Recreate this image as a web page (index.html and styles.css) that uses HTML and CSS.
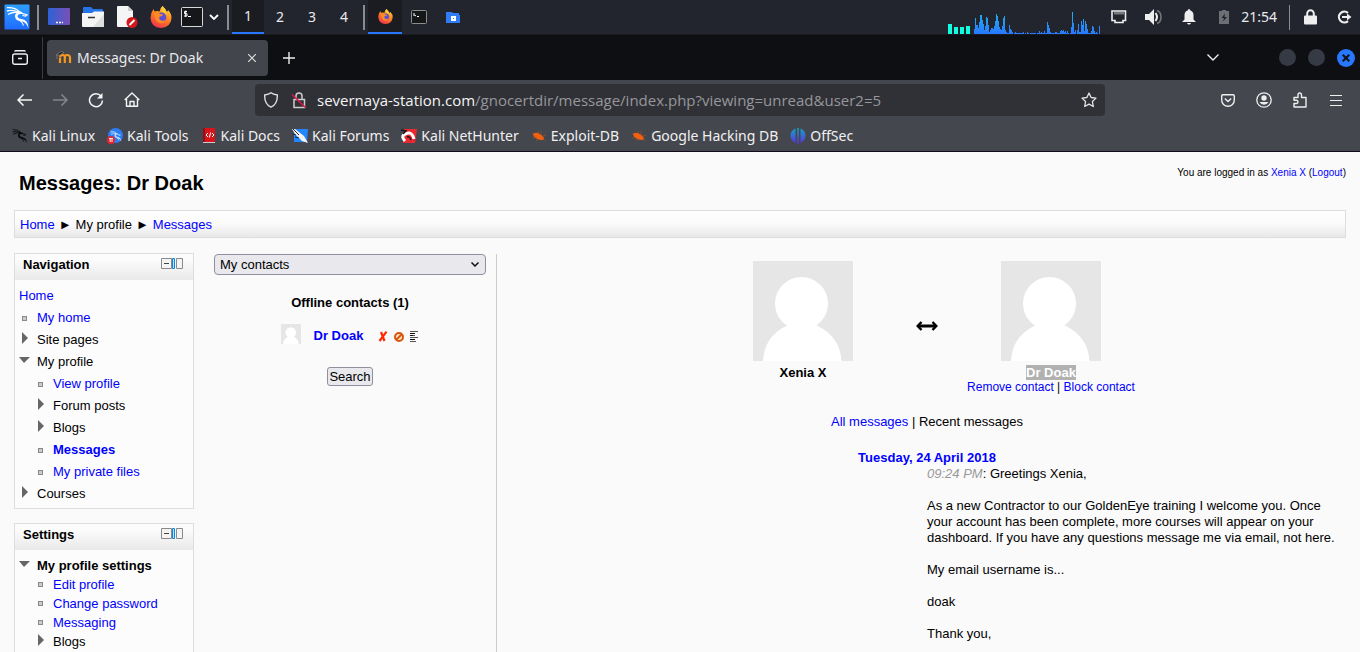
FILE: index.html
```html
<!DOCTYPE html>
<html lang="en">
<head>
<meta charset="utf-8">
<title>Messages: Dr Doak</title>
<link rel="stylesheet" href="styles.css">
</head>
<body>
<svg class="defs" aria-hidden="true">
  <defs>
    <linearGradient id="g-blue" x1="0" y1="0" x2="0" y2="1"><stop offset="0" stop-color="#2da0ff"/><stop offset="1" stop-color="#1f6bff"/></linearGradient>
    <linearGradient id="g-desk" x1="0" y1="0" x2="1" y2="0"><stop offset="0" stop-color="#2d62d8"/><stop offset="1" stop-color="#7a4fb5"/></linearGradient>
    <linearGradient id="g-fox" x1=".8" y1="0" x2=".3" y2="1"><stop offset="0" stop-color="#ffd43c"/><stop offset=".45" stop-color="#ff8a1f"/><stop offset="1" stop-color="#f0304c"/></linearGradient>
    <linearGradient id="g-off" x1="0" y1="0" x2="0" y2="1"><stop offset="0" stop-color="#12a5c4"/><stop offset="1" stop-color="#5a2fe0"/></linearGradient>
    <linearGradient id="g-spark" x1="0" y1="12" x2="0" y2="34" gradientUnits="userSpaceOnUse"><stop offset="0" stop-color="#1bb4f0"/><stop offset="1" stop-color="#2878ff"/></linearGradient>
    <symbol id="dragon" viewBox="0 0 24 24">
      <path d="M1 2.600Q9 2 13 6.500M1 6Q7 4.500 12 7M2 9.500Q7 6.500 12 7.500" fill="none" stroke="currentColor" stroke-width="1.300"/>
      <path d="M11 5.500Q16 6 18 9.500L15.500 9Q12 8.500 11.500 11Q11.500 13.500 16 14Q22 15 22.500 23Q20 16.800 15 16.300Q9 15.700 9 11Q9 8 12 7.500Z" fill="currentColor"/>
      <path d="M17 8.500l4 1.500-1.500 1-3-.5M14 15.500q3 2 3.500 5" fill="none" stroke="currentColor" stroke-width="1.200"/>
    </symbol>
    <symbol id="firefox" viewBox="0 0 22 22">
      <path d="M12.500 0Q16 3 16.500 5.500Q18 5.500 18 4Q22 8 21.500 12.500Q20.500 21.500 11 22Q1 21.500.5 12Q.5 7 3.500 3L4.500 5.500Q7 4.500 9.500 5.500Q10 2 12.500 0Z" fill="url(#g-fox)"/>
      <circle cx="11.300" cy="11.500" r="5" fill="#5b4fd8"/>
      <path d="M4 7Q8 5.500 10.500 8L13.500 8.800Q12 10.500 9.500 10.800Q8.500 13.500 11 14.500Q13.500 15.500 16 13.500Q14 18 9.500 17Q5 15.500 4 7Z" fill="#ff8a24"/>
      <path d="M12.500 0Q17 5 17.500 10Q17 7 13 6Q9.500 4 12.500 0Z" fill="#ffcb35"/>
    </symbol>
    <symbol id="bug" viewBox="0 0 16 16">
      <path d="M2 6Q5 3.500 8.500 6Q13 8 13 11.500Q10 12.500 6.500 11Q2.500 9.500 2 6Z" fill="#f0600d"/>
      <path d="M1 5l2 1M7 3l1 3M10 3v4M1.500 10l4-.500M5 13l2-2M12 8l3-1M12 11l2.500 2" stroke="#a85424" stroke-width=".6"/>
    </symbol>
    <symbol id="avatar" viewBox="0 0 100 100">
      <path d="M0 0h100v100H0z" fill="#e6e6e6"/>
      <circle cx="48.500" cy="42.500" r="26.500" fill="#fff"/>
      <path d="M10 100Q11 76 33 65Q48 58 65 65Q87 76 88.500 100Z" fill="#fff"/>
    </symbol>
    <symbol id="dock" viewBox="0 0 22 11">
      <path d="M.5.500h10v10H.5zM15.500.500h6v10h-6z" fill="#f4f4f4" stroke="#8a8a8a"/>
      <path d="M3 5.500h5" stroke="#444"/><path d="M11.500.500h2v10h-2z" fill="#b9e2ff" stroke="#0d86e0"/>
    </symbol>
  </defs>
</svg>

<header class="panel">
  <button class="panel-btn menu" aria-label="Applications"><svg width="30" height="30" viewBox="0 0 30 30"><rect x="2.500" y="2.500" width="25" height="25" rx="1" fill="url(#g-blue)"/><use href="#dragon" x="4" y="3" width="24" height="24" color="#fff"/></svg></button>
  <span class="rule"></span>
  <button class="panel-btn" aria-label="Show desktop"><svg width="22" height="18" viewBox="0 0 22 18"><rect width="22" height="17" rx="1" fill="url(#g-desk)"/><path d="M8 14.500h2M11 14.500h2M14 14.500h1" stroke="#fff" stroke-width="1.500"/></svg></button>
  <button class="panel-btn" aria-label="Files"><svg width="22" height="20" viewBox="0 0 22 20"><path d="M1 1q0-1 1-1h7l2 2h9q1 0 1 1v5H1z" fill="#2673e8"/><path d="M0 6h10l2-1.500h10V19q0 1-1 1H1q-1 0-1-1z" fill="#f4f4f4"/><path d="M22 7v13H11z" fill="#dedede"/><path d="M6 10.500h7" stroke="#333" stroke-width="1.500"/></svg></button>
  <button class="panel-btn" aria-label="Text editor"><svg width="21" height="22" viewBox="0 0 21 22"><path d="M1 0h10l5 5v16H1q-1 0-1-1V1q0-1 1-1z" fill="#f5f5f5"/><path d="M11 0v5h5z" fill="#cfcfcf"/><circle cx="15" cy="16.500" r="5.500" fill="#d2181c"/><path d="M12.500 19l5-5" stroke="#fff" stroke-width="2"/></svg></button>
  <button class="panel-btn" aria-label="Firefox"><svg width="22" height="22"><use href="#firefox"/></svg></button>
  <button class="panel-btn term" aria-label="Terminal"><svg width="22" height="20" viewBox="0 0 22 20"><rect x=".5" y=".5" width="21" height="19" rx="1" fill="#15171a" stroke="#d8d8d8"/><path d="M6 4.500H3.500v2.200H6V9H3M4.700 3.500V10M7 9.500h3" fill="none" stroke="#fff"/></svg></button>
  <button class="panel-btn more" aria-label="More terminals"><svg width="10" height="6" viewBox="0 0 10 6"><path d="M1 1l4 4 4-4" fill="none" stroke="#fff" stroke-width="1.800"/></svg></button>
  <span class="rule"></span>
  <nav class="spaces" aria-label="Workspaces"><button class="space on">1</button><button class="space">2</button><button class="space">3</button><button class="space">4</button></nav>
  <span class="rule"></span>
  <button class="panel-btn on" aria-label="Firefox window"><svg width="15" height="15"><use href="#firefox"/></svg></button>
  <button class="panel-btn" aria-label="Terminal window"><svg width="16" height="14" viewBox="0 0 16 14"><rect x=".5" y=".5" width="15" height="13" rx="1" fill="#141618" stroke="#8c8c8c"/><path d="M3 3v3M3.500 5l1.500 1M6 6.500h2" stroke="#fff"/></svg></button>
  <button class="panel-btn" aria-label="Files window"><svg width="14" height="11" viewBox="0 0 14 11"><path d="M0 0h6l1 1h6v2h1v8H0z" fill="#2f7df6"/><path d="M5 4h5v5H5z" fill="#fff"/><path d="M7 6h1v1H7z" fill="#2f7df6"/></svg></button>
  <div class="tray">
    <svg id="load" width="153" height="34" viewBox="0 0 153 34" aria-label="System load"></svg>
    <button class="tray-btn" aria-label="Network"><svg width="16" height="14" viewBox="0 0 16 14"><path d="M1 1h13.500v9.500H12V12.500H4V10.500H1z" fill="none" stroke="#eee" stroke-width="1.600"/><path d="M4 2v2.500M6 2v2.500M8 2v2.500M10 2v2.500M12 2v2.500" stroke="#ccc"/></svg></button>
    <button class="tray-btn" aria-label="Volume"><svg width="18" height="16" viewBox="0 0 18 16"><path d="M0 5h4l5-5v16l-5-5H0z" fill="#eee"/><path d="M10.500 4q3 4 0 8" stroke="#eee" stroke-width="2" fill="none"/><path d="M12 1.500Q16 3 16 8t-4 6.500" fill="none" stroke="#74767c" stroke-width="1.600"/></svg></button>
    <button class="tray-btn" aria-label="Notifications"><svg width="14" height="16" viewBox="0 0 14 16"><path d="M7 0q1 0 1 1.200Q11.500 2.500 11.500 6v4.500L14 13H0l2.500-2.500V6Q2.500 2.500 6 1.200 6 0 7 0zM5 14h4q-.5 1.500-2 1.500T5 14z" fill="#eee"/></svg></button>
    <button class="tray-btn" aria-label="Battery"><svg width="10" height="14" viewBox="0 0 10 14"><path d="M0 1h3V0h4v1h3v13H0z" fill="#6d6f75"/><path d="M6 3.500L2.500 8H5l-1 3.500L8 7H5.500z" fill="#22242c"/></svg></button>
    <time class="clock">21:54</time>
    <span class="rule"></span>
    <button class="tray-btn" aria-label="Lock"><svg width="13" height="16" viewBox="0 0 13 16"><path d="M3.200 7V4.500a3.300 3.300 0 0 1 6.600 0V7" fill="none" stroke="#eee" stroke-width="2"/><rect y="6.500" width="13" height="9" rx="1" fill="#eee"/></svg></button>
    <button class="tray-btn leave" aria-label="Log out"><svg width="15" height="14" viewBox="0 0 15 14"><path d="M11 2.800A5.500 5.500 0 1 0 11 11.200" fill="none" stroke="#eee" stroke-width="2.200"/><path d="M5 6h5V3.500L14.500 7 10 10.500V8H5z" fill="#eee"/></svg></button>
  </div>
</header>

<div class="tabs">
  <button class="tab-icon view" aria-label="Firefox View"><svg width="16" height="15" viewBox="0 0 16 15"><rect x=".7" y="4" width="14.600" height="10.300" rx="2" fill="none" stroke="#eee" stroke-width="1.400"/><path d="M2.500 1.500q.5-.8 1.500-.8h8q1 0 1.500.8M6 8.500h4" fill="none" stroke="#eee" stroke-width="1.400"/></svg></button>
  <div class="tab">
    <svg width="16" height="14" viewBox="0 0 16 14"><path d="M4 12V6.500M8.800 12V6q0-2-2.200-2T4.200 6M8.800 6q0-2 2.500-2t2.700 2.500V12" fill="none" stroke="#f7981d" stroke-width="2.200"/><path d="M0 4l5-3.500 3 1-4 2.500zM1 4v4" fill="#222" stroke="#888" stroke-width=".7"/></svg>
    <span class="tab-title">Messages: Dr Doak</span>
    <button class="close" aria-label="Close tab"><svg width="8" height="8" viewBox="0 0 8 8"><path d="M0 0l8 8M8 0L0 8" stroke="#ddd" stroke-width="1.200"/></svg></button>
  </div>
  <button class="tab-icon" aria-label="New tab"><svg width="12" height="12" viewBox="0 0 12 12"><path d="M6 0v12M0 6h12" stroke="#eee" stroke-width="1.400"/></svg></button>
  <button class="tab-icon list" aria-label="List all tabs"><svg width="12" height="7" viewBox="0 0 12 7"><path d="M.5.500L6 6 11.500.500" fill="none" stroke="#eee" stroke-width="1.400"/></svg></button>
  <div class="window">
    <button class="dot" aria-label="Minimize"></button><button class="dot" aria-label="Maximize"></button>
    <button class="dot quit" aria-label="Close window"><svg width="8" height="8" viewBox="0 0 8 8"><path d="M.7.700l6.600 6.600M7.300.700L.7 7.300" stroke="#101216" stroke-width="2"/></svg></button>
  </div>
</div>

<div class="toolbar">
  <button class="tool" aria-label="Back"><svg width="15" height="12" viewBox="0 0 15 12"><path d="M15 6H1M6.500.500L1 6l5.500 5.500" fill="none" stroke="#f5f5f5" stroke-width="1.500"/></svg></button>
  <button class="tool" aria-label="Forward" disabled><svg width="15" height="12" viewBox="0 0 15 12"><path d="M0 6h14M8.500.500L14 6l-5.500 5.500" fill="none" stroke="#85878c" stroke-width="1.500"/></svg></button>
  <button class="tool" aria-label="Reload"><svg width="16" height="16" viewBox="0 0 16 16"><path d="M13 4A6.500 6.500 0 1 0 14.500 8.500" fill="none" stroke="#f5f5f5" stroke-width="1.500"/><path d="M14.500 1v5.500H9z" fill="#f5f5f5"/></svg></button>
  <button class="tool" aria-label="Home"><svg width="16" height="16" viewBox="0 0 16 16"><path d="M.7 8L8 1l7.300 7M2.500 7v7.300h11V7M6 14V9.500h4V14" fill="none" stroke="#f5f5f5" stroke-width="1.400" stroke-linejoin="round"/></svg></button>
  <div class="address">
    <svg width="16" height="16" viewBox="0 0 16 16"><path d="M8 .8Q10 2.500 14.300 3 14.700 12 8 15.200 1.300 12 1.700 3 6 2.500 8 .8z" fill="none" stroke="#ddd" stroke-width="1.400"/></svg>
    <svg width="16" height="17" viewBox="0 0 16 17"><path d="M3 7.500h10.500v8H3zM5 7V4q0-3 3-3t3 3v3" fill="none" stroke="#ccc" stroke-width="1.500"/><path d="M1 2.500l13.500 13" stroke="#e8134b" stroke-width="1.400"/></svg>
    <div class="url" role="textbox" aria-label="Address">severnaya-station.com<span class="path">/gnocertdir/message/index.php?viewing=unread&amp;user2=5</span></div>
    <button class="star" aria-label="Bookmark"><svg width="16" height="16" viewBox="0 0 16 16"><path d="M8 1l2.100 4.500 4.900.6-3.600 3.400.9 5L8 12.100l-4.300 2.400.9-5L1 6.100l4.900-.6z" fill="none" stroke="#e4e4e4" stroke-width="1.300" stroke-linejoin="round"/></svg></button>
  </div>
  <button class="tool" aria-label="Pocket"><svg width="14" height="13" viewBox="0 0 14 13"><path d="M2 .7h10q1.300 0 1.300 1.300v4A6.300 6.300 0 0 1 .7 6V2Q.7.700 2 .7zM3.800 4.500L7 7.500l3.200-3" fill="none" stroke="#eee" stroke-width="1.400"/></svg></button>
  <button class="tool" aria-label="Account"><svg width="16" height="16" viewBox="0 0 16 16"><circle cx="8" cy="8" r="7.200" fill="none" stroke="#eee" stroke-width="1.300"/><circle cx="8" cy="6" r="2.700" fill="#eee"/><path d="M3.500 10h9Q11 12.700 8 12.700T3.500 10z" fill="#eee"/></svg></button>
  <button class="tool" aria-label="Extensions"><svg width="14" height="16" viewBox="0 0 14 16"><path d="M1 5.500h4V3q0-2 1.700-2T8.500 3v2.500H13V15H1v-3.500h2.500q1.500-.2 1.500-1.600T3.500 8.300H1z" fill="none" stroke="#eee" stroke-width="1.400" stroke-linejoin="round"/></svg></button>
  <button class="tool" aria-label="Menu"><svg width="12" height="11" viewBox="0 0 12 11"><path d="M0 .5h12M0 5.500h12M0 10.500h12" stroke="#eee"/></svg></button>
</div>

<nav class="bookmarks" aria-label="Bookmarks">
  <a href="#"><svg width="16" height="16"><use href="#dragon" color="#08090a"/></svg>Kali Linux</a>
  <a href="#"><svg width="16" height="16" viewBox="0 0 16 16"><circle cx="8.500" cy="7.500" r="7.500" fill="#2b7df5"/><use href="#dragon" x="3" y="2" width="12" height="12" color="#cfe2ff"/><circle cx="4" cy="12" r="4" fill="#e3262e"/><path d="M2 10.500h4M3.200 10.500V14M5 10.500V14" stroke="#fff" stroke-width=".9"/></svg>Kali Tools</a>
  <a href="#"><svg width="16" height="16" viewBox="0 0 16 16"><path d="M2 0h12v14H2z" fill="#d9151b"/><path d="M2 0h2v14H2z" fill="#8e1116"/><path d="M2 14.500h12" stroke="#ccc"/><path d="M7 5L5 7l2 2M11 5l2 2-2 2M9.700 4.500l-1.400 5" stroke="#fff" fill="none"/></svg>Kali Docs</a>
  <a href="#"><svg width="16" height="16" viewBox="0 0 16 16"><path d="M2 1h14l-1 13H2z" fill="#2386ff"/><path d="M0 1l3 0 9 7 4 7-6-2-7-7z" fill="#f4f4f4"/><path d="M1 1l6 6M4 7l-3-1M7 10l-4-1" stroke="#222"/></svg>Kali Forums</a>
  <a href="#"><svg width="16" height="16" viewBox="0 0 16 16"><path d="M3 1h13l-2 14H2z" fill="#e92831"/><path d="M4 13Q-1 8 5 5.500T13 11" fill="none" stroke="#fff" stroke-width="3"/><path d="M0 2l5 1-3 3M6 9q3-1 4 3" fill="none" stroke="#15171a" stroke-width="1.500"/></svg>Kali NetHunter</a>
  <a href="#"><svg width="16" height="16"><use href="#bug"/></svg>Exploit-DB</a>
  <a href="#"><svg width="16" height="16"><use href="#bug"/></svg>Google Hacking DB</a>
  <a href="#"><svg width="16" height="16" viewBox="0 0 16 16"><path d="M5.500 .5V15Q.5 12.500.5 7.500T5.500 .5zM7.200 0h1.600v16H7.200zM10.500 .5V15q5-2.500 5-7.500T10.500 .5z" fill="url(#g-off)"/></svg>OffSec</a>
</nav>

<div class="page">
  <div class="page-head">
    <h1>Messages: Dr Doak</h1>
    <p class="login">You are logged in as <a href="#">Xenia X</a> (<a href="#">Logout</a>)</p>
  </div>
  <nav class="crumbs" aria-label="Breadcrumb"><a href="#">Home</a><span>►</span><span>My profile</span><span>►</span><a href="#">Messages</a></nav>
  <div class="columns">
    <aside class="side">
      <section class="block">
        <h2>Navigation<button class="dock" aria-label="Dock Navigation block"><svg width="22" height="11"><use href="#dock"/></svg></button></h2>
        <ul class="tree">
          <li class="root"><a href="#">Home</a></li>
          <li class="leaf"><a href="#">My home</a></li>
          <li class="shut">Site pages</li>
          <li class="open">My profile</li>
          <li><ul class="sub">
            <li class="leaf"><a href="#">View profile</a></li>
            <li class="shut">Forum posts</li>
            <li class="shut">Blogs</li>
            <li class="leaf"><a class="strong" href="#">Messages</a></li>
            <li class="leaf"><a href="#">My private files</a></li>
          </ul></li>
          <li class="shut">Courses</li>
        </ul>
      </section>
      <section class="block">
        <h2>Settings<button class="dock" aria-label="Dock Settings block"><svg width="22" height="11"><use href="#dock"/></svg></button></h2>
        <ul class="tree tight">
          <li class="open strong">My profile settings</li>
          <li><ul class="sub">
            <li class="leaf"><a href="#">Edit profile</a></li>
            <li class="leaf"><a href="#">Change password</a></li>
            <li class="leaf"><a href="#">Messaging</a></li>
            <li class="shut">Blogs</li>
          </ul></li>
        </ul>
      </section>
    </aside>
    <section class="contacts">
      <div class="pick"><select aria-label="Message navigation"><option>My contacts</option></select><svg class="caret" width="8" height="5" viewBox="0 0 8 5"><path d="M.5.500L4 4 7.500.500" fill="none" stroke="#111" stroke-width="1.500"/></svg></div>
      <h3>Offline contacts (1)</h3>
      <div class="contact">
        <svg width="20" height="20"><use href="#avatar"/></svg>
        <a class="strong" href="#">Dr Doak</a>
        <span class="acts">
          <button aria-label="Remove contact"><svg width="10" height="11" viewBox="0 0 10 11"><path d="M3 1l3.500 9M8.500.700L1.500 10" stroke="#ff2a00" stroke-width="2.200"/></svg></button>
          <button aria-label="Block contact"><svg width="10" height="10" viewBox="0 0 10 10"><circle cx="5" cy="5" r="4" fill="#fbe3c8" stroke="#d9560b" stroke-width="2"/><path d="M2.500 7.500l5-5" stroke="#d9560b" stroke-width="2"/></svg></button>
          <button aria-label="Message history"><svg width="9" height="11" viewBox="0 0 9 11"><path d="M0 .5h8M0 4.500h5M0 6.500h8M0 10.500h6" stroke="#555"/><path d="M0 2.500h5M0 4.500h3M0 8.500h5" stroke="#111"/></svg></button>
        </span>
      </div>
      <button class="search">Search</button>
    </section>
    <main class="history">
      <div class="people">
        <div class="person"><svg width="100" height="100"><use href="#avatar"/></svg><b>Xenia X</b></div>
        <svg class="arrows" width="22" height="10" viewBox="0 0 22 10"><path d="M2 5h18" stroke="#000" stroke-width="3"/><path d="M5.500 1L1.700 5l3.800 4M16.500 1l3.800 4-3.800 4" fill="none" stroke="#000" stroke-width="2.400"/></svg>
        <div class="person"><svg width="100" height="100"><use href="#avatar"/></svg><b><mark>Dr Doak</mark></b><span class="links"><a href="#">Remove contact</a> | <a href="#">Block contact</a></span></div>
      </div>
      <p class="filter"><a href="#">All messages</a> | Recent messages</p>
      <h4>Tuesday, 24 April 2018</h4>
      <article class="message">
        <p><time>09:24 PM</time>: Greetings Xenia,</p>
        <p>As a new Contractor to our GoldenEye training I welcome you. Once your account has been complete, more courses will appear on your dashboard. If you have any questions message me via email, not here.</p>
        <p>My email username is...</p>
        <p>doak</p>
        <p>Thank you,</p>
      </article>
    </main>
  </div>
</div>
<script src="load.js"></script>
</body>
</html>
```
FILE: styles.css
```css
*, *::before { box-sizing: border-box; }
body {
  margin: 0;
  height: 100vh;
  overflow: hidden;
  display: flex;
  flex-direction: column;
  background: #fafafa;
  color: #000;
  font: 13px/16px "Liberation Sans", Arial, sans-serif;
}
h1, h2, h3, h4, p, ul { margin: 0; padding: 0; }
ul { list-style: none; }
a { color: #00f; text-decoration: none; }
svg { display: block; flex: none; }
.defs { position: absolute; width: 0; height: 0; }
button { border: 0; padding: 0; background: none; font: inherit; color: inherit; }
.strong { font-weight: bold; }

/* Desktop panel */
.panel {
  display: flex;
  flex: none;
  height: 35px;
  background: #23252e;
  border-bottom: 1px solid #1a1b21;
  color: #e8eaee;
  font: 14px/20px "Noto Sans", sans-serif;
}
.panel-btn { width: 34px; display: grid; place-items: center; }
.panel-btn.term { width: 28px; }
.panel-btn.more { width: 16px; }
.panel-btn.on, .space.on { background: #1a1c22; border-bottom: 2px solid #2777ff; }
.rule { width: 2px; height: 25px; margin: 5px 3px 4px; background: #8b8c91; align-self: center; flex: none; }
.more + .rule { margin-left: 5px; }
.spaces { display: flex; }
.space { width: 32px; }
.tray { margin-left: auto; display: flex; align-items: center; }
.tray-btn { width: 35px; height: 34px; display: grid; place-items: center; }
.tray-btn.leave { width: 32px; }
.clock { margin-right: 9px; }
.tray .rule { width: 1px; }

/* Browser tabs */
.tabs { display: flex; flex: none; align-items: center; height: 45px; background: #0e0f13; color: #e8e8ea; padding-right: 5px; font: 14px/20px "Noto Sans", sans-serif; }
.tab-icon { width: 42px; height: 42px; display: grid; place-items: center; flex: none; }
.view { border-right: 1px solid #3b3c42; width: 43px; padding-right: 3px; }
.tab { display: flex; align-items: center; gap: 5px; width: 221px; height: 36px; margin-left: 4px; padding: 0 12px 0 9px; border-radius: 4px; background: #43454d; }
.tab-title { flex: 1; white-space: nowrap; }
.close { display: grid; place-items: center; }
.list { margin-left: auto; margin-right: 45px; }
.window { display: flex; align-items: center; gap: 12px; }
.dot { width: 17px; height: 17px; border-radius: 50%; background: #363a45; display: grid; place-items: center; }
.quit { width: 18px; height: 18px; background: #2777ff; }

/* Browser toolbar */
.toolbar { display: flex; flex: none; align-items: center; height: 40px; padding: 0 6px; background: #45474e; }
.tool { width: 36px; height: 36px; display: grid; place-items: center; flex: none; }
.address { flex: 1; display: flex; align-items: center; gap: 12px; height: 32px; margin: 0 105px; padding: 0 8px; border-radius: 4px; background: #303136; color: #f4f4f5; font: 15px/20px "Open Sans", "Noto Sans", sans-serif; }
.url { flex: 1; margin-left: -2px; white-space: nowrap; overflow: hidden; }
.path { color: #96979b; }
.bookmarks { display: flex; flex: none; align-items: center; gap: 12px; height: 32px; padding: 0 12px; background: #45474e; border-bottom: 1px solid #120a1c; font: 14px/20px "Noto Sans", sans-serif; }
.bookmarks a { display: flex; align-items: center; gap: 4px; color: #f0f0f2; white-space: nowrap; }

/* Site page */
.page { flex: 1; min-height: 0; display: flex; flex-direction: column; padding: 0 14px; }
.page-head { display: flex; justify-content: space-between; align-items: flex-start; padding: 15px 0 15px 5px; }
h1 { margin-top: 4px; font-size: 20px; line-height: 24px; }
.login { font-size: 10px; line-height: 12px; }
.crumbs { display: flex; flex: none; gap: 4px; align-items: center; height: 28px; padding: 1px 5px 0; border: 1px solid #ddd; background: linear-gradient(#fff, #fafafa 50%, #e8e8e8); }
.columns { flex: 1; min-height: 0; display: flex; padding-top: 15px; }
.side { width: 180px; flex: none; display: flex; flex-direction: column; gap: 14px; }
.block { border: 1px solid #ddd; background: #fcfcfc; flex: none; }
.block:last-child { flex: 1 0 auto; border-bottom: 0; }
h2 { display: flex; justify-content: space-between; height: 26px; padding: 3px 10px 0 8px; font-size: 13px; line-height: 16px; background: linear-gradient(#fcfcfc 20%, #e9e9e9); }
.dock { height: 12px; display: grid; place-items: center; }
.tree { padding: 5px 4px 3px; line-height: 22px; }
.tree.tight { line-height: 19px; padding-top: 6px; }
.sub { padding-left: 16px; }
.leaf, .shut, .open { display: flex; align-items: center; }
.leaf::before { content: ""; width: 5px; height: 5px; margin: 0 10px 0 3px; border: 1px solid #888; background: #ccc; }
.shut::before { content: ""; margin: 0 9px 4px 3px; border: solid transparent; border-width: 6px 0 6px 6px; border-left-color: #666; }
.open::before { content: ""; margin: 0 7px 4px 0; border: solid transparent; border-width: 6px 6px 0 5px; border-top-color: #666; }

/* Contacts */
.contacts { flex: none; width: 303px; margin-top: 1px; padding: 0 10px 0 20px; border-right: 1px solid #ccc; text-align: center; }
.pick { position: relative; }
select { display: block; width: 100%; height: 21px; padding: 0 5px; appearance: none; border: 1px solid #8f8f9d; border-radius: 4px; background: #e9e9ed; color: #000; font: inherit; }
.caret { position: absolute; right: 7px; top: 8px; pointer-events: none; }
h3 { margin-top: 20px; font-size: 13px; }
.contact { display: flex; align-items: center; justify-content: center; margin: 13px 0 23px; }
.contact a { margin: 3px 15px 0 13px; }
.acts { display: flex; align-items: center; gap: 6px; padding-top: 5px; }
.search { height: 19px; padding: 0 1px; border: 1px solid #8f8f9d; border-radius: 3px; background: #e9e9ed; }

/* Conversation */
.history { flex: 1; padding: 8px 0 0 11px; text-align: center; }
.people { display: grid; grid-template-columns: 164px 84px 164px; justify-content: center; }
.person { display: flex; flex-direction: column; align-items: center; white-space: nowrap; }
.person b { margin-top: 4px; line-height: 15px; }
mark { background: #b1b1b1; color: #fff; }
.arrows { justify-self: center; margin-top: 60px; }
.links { font-size: 12px; line-height: 14px; }
.filter { margin: 20px 0; }
h4 { font-size: 13px; color: #00f; }
.message { margin-left: 50%; text-align: left; }
.message p { margin-bottom: 16px; }
.message time { font-style: italic; color: #999; }
```
FILE: load.js
```js
// One entry per pixel column of the processor load graph.
const load = [
  5, 16, 9, 9, 6, 12, 19, 19, 14, 10, 4, 8, 17, 16, 9, 2, 4, 6, 6, 5, 8, 13, 20, 18, 13, 7, 5, 4, 8, 16, 18, 4,
  2, 1, 1, 9, 5, 4, 2, 0, 1, 2, 1, 1, 1, 1, 1, 1, 1, 2, 0, 1, 0, 2, 1, 0, 1, 1, 1, 1, 1, 1, 0, 1, 1, 3, 1, 2, 1,
  1, 3, 1, 1, 12, 9, 6, 2, 1, 1, 1, 1, 2, 2, 1, 1, 1, 3, 4, 3, 4, 2, 3, 1, 3, 1, 0, 1, 7, 22, 11, 2, 4, 0, 4,
  10, 2, 2, 13, 9, 15, 3, 13, 10, 5, 1, 1, 1, 3, 8, 7, 3, 1, 2, 1, 0, 8
];
const cores = [10, 7, 7, 8];
const svg = document.getElementById("load");

function bar(x, width, height, fill) {
  const rect = document.createElementNS("http://www.w3.org/2000/svg", "rect");
  rect.setAttribute("x", x);
  rect.setAttribute("y", 34 - height);
  rect.setAttribute("width", width);
  rect.setAttribute("height", height);
  rect.setAttribute("fill", fill);
  svg.appendChild(rect);
}

cores.forEach((height, i) => bar(i * 6, 4, height, "#0fffe0"));
load.forEach((height, i) => bar(26 + i, 1, height, "url(#g-spark)"));
```
